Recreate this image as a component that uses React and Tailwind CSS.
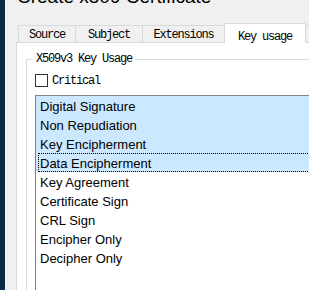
import React from 'react';

const mono = { fontFamily: '"Liberation Mono", "DejaVu Sans Mono", monospace' };

const usages = [
  { label: 'Digital Signature', checked: true },
  { label: 'Non Repudiation', checked: true },
  { label: 'Key Encipherment', checked: true },
  { label: 'Data Encipherment', checked: true, focused: true },
  { label: 'Key Agreement' },
  { label: 'Certificate Sign' },
  { label: 'CRL Sign' },
  { label: 'Encipher Only' },
  { label: 'Decipher Only' },
];

function Tab({ label, width }) {
  return (
    <div
      className={`${width} h-[17px] shrink-0 border-l border-t border-[#d9d9d9] bg-[#f0f0f0] flex items-center justify-center text-[12px] leading-[12px] tracking-[-1.2px] text-black`}
      style={mono}
    >
      <span className="pt-[2px]">{label}</span>
    </div>
  );
}

export default function App() {
  return (
    <div className="w-[309px] h-[290px] overflow-hidden flex bg-[#f0f0f0]">
      <div className="w-[5px] shrink-0 bg-[#0e2847]" />

      <div className="flex-1 flex flex-col min-w-0 overflow-hidden">
        {/* window title, scrolled partly out of view */}
        <div className="h-[23px] shrink-0 overflow-hidden pl-[12px]">
          <p className="-mt-[13px] text-[19px] leading-[19px] text-black whitespace-nowrap font-['Liberation_Sans',Arial,sans-serif]">
            Create x509 Certificate
          </p>
        </div>

        {/* tabs */}
        <div className="h-[19px] ml-[13px] flex items-end shrink-0">
          <Tab label="Source" width="w-[57px]" />
          <Tab label="Subject" width="w-[67px]" />
          <Tab label="Extensions" width="w-[82px]" />
          <div
            className="relative z-10 w-[82px] h-[20px] -mb-[1px] shrink-0 border-l border-t border-r border-[#d9d9d9] bg-white flex items-start justify-center text-[12px] leading-[12px] tracking-[-1.2px] text-black"
            style={mono}
          >
            <span className="pt-[7px]">Key usage</span>
          </div>
          <div className="w-[30px] h-[17px] shrink-0 border-t border-[#d9d9d9] bg-[#f0f0f0]" />
        </div>

        {/* tab page */}
        <div className="ml-[11px] w-[320px] flex-1 min-h-0 overflow-hidden border-l border-t border-[#d9d9d9] bg-white">
          <fieldset className="ml-[9px] mt-[9px] pl-[6px] border-l border-t border-[#dcdcdc] h-[300px]">
            <legend
              className="px-[3px] text-[12px] leading-[14px] tracking-[-1.2px] text-black"
              style={mono}
            >
              X509v3 Key Usage
            </legend>

            <label className="mt-[8px] ml-[2px] flex items-center h-[13px]">
              <span className="w-[13px] h-[13px] border border-[#333333] bg-white shrink-0" />
              <span
                className="ml-[4px] pt-[2px] text-[12px] leading-[13px] tracking-[-1.2px] text-black"
                style={mono}
              >
                Critical
              </span>
            </label>

            <div className="mt-[8px] ml-[2px] border-l border-t border-[#828282] bg-white h-[300px]">
              {usages.map((u) => (
                <div
                  key={u.label}
                  className={`h-[19px] pl-[2px] ${u.checked ? 'bg-[#cce8ff]' : 'bg-white'}`}
                >
                  <div
                    className={`h-full pl-[1px] pt-[1px] border border-dotted ${u.focused ? 'border-black' : 'border-transparent'} text-[13px] leading-[17px] text-black whitespace-nowrap font-['Liberation_Sans',Arial,sans-serif]`}
                  >
                    {u.label}
                  </div>
                </div>
              ))}
            </div>
          </fieldset>
        </div>
      </div>
    </div>
  );
}
